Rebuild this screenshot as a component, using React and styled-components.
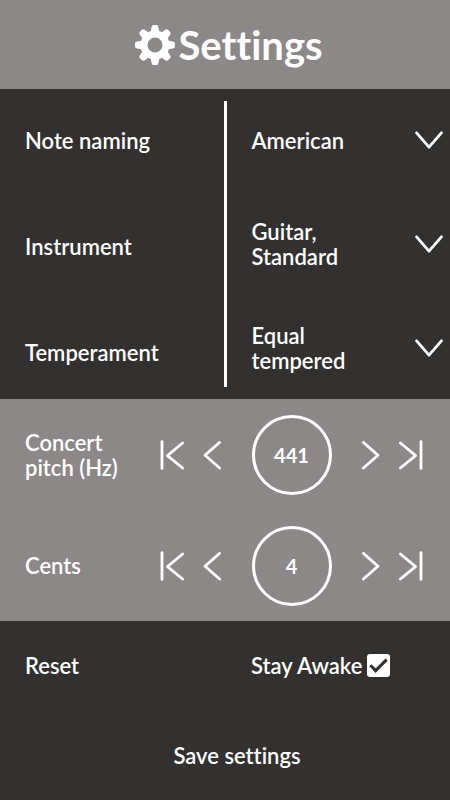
import React, { useState } from "react";
import styled, { createGlobalStyle } from "styled-components";

const dark = "#32312f";
const grey = "#8c8888";

const GlobalStyle = createGlobalStyle`
  *, *::before, *::after { box-sizing: border-box; }
  body {
    margin: 0;
    background: ${dark};
    color: #fff;
    font-family: Lato, "Open Sans", sans-serif;
    font-size: 22px;
    font-weight: 600;
    line-height: 25px;
    font-variant-ligatures: none;
  }
  button { font: inherit; color: inherit; background: none; border: 0; padding: 0; cursor: pointer; }
`;

const Page = styled.main`
  display: flex;
  flex-direction: column;
  min-height: 100vh;
`;

const Header = styled.header`
  display: flex;
  align-items: center;
  justify-content: center;
  gap: 3px;
  min-height: 89px;
  padding-left: 8px;
  background: ${grey};
`;

const Title = styled.h1`
  margin: 0;
  font-size: 40px;
  line-height: 48px;
  font-weight: 700;
`;

const Choices = styled.section`
  display: grid;
  grid-template-columns: 1fr 3px 1fr;
  padding: 12px 0;
`;

const Divider = styled.div`
  background: #fff;
`;

const Column = styled.div`
  display: flex;
  flex-direction: column;
  justify-content: center;
  gap: ${(p) => p.$gap};
  padding: ${(p) => p.$padding};
`;

const ChoiceLabel = styled.label`
  display: flex;
  align-items: center;
  min-height: 50px;
`;

const Choice = styled.div`
  position: relative;
  display: flex;
  align-items: center;
  justify-content: space-between;
  min-height: 50px;
`;

const ChoiceValue = styled.span`
  max-width: 120px;
`;

const ChoiceSelect = styled.select`
  position: absolute;
  inset: 0;
  width: 100%;
  opacity: 0;
  font: inherit;
  cursor: pointer;
`;

const Steppers = styled.section`
  background: ${grey};
`;

const StepperRow = styled.div`
  display: grid;
  grid-template-columns: 135px 1fr;
  align-items: center;
  min-height: 111px;
  padding: 0 27px 0 25px;
`;

const StepperLabel = styled.label`
  max-width: 110px;
`;

const Controls = styled.div`
  display: flex;
  align-items: center;
  justify-content: space-between;
`;

const StepPair = styled.div`
  display: flex;
  gap: 18px;
`;

const StepButton = styled.button`
  display: flex;
`;

const Dial = styled.input`
  width: 80px;
  height: 80px;
  padding: 0;
  border: 3px solid #fff;
  border-radius: 50%;
  background: none;
  color: #fff;
  text-align: center;
  font-family: inherit;
  font-size: 20px;
  font-weight: 700;
`;

const Options = styled.section`
  display: grid;
  grid-template-columns: 1fr 1fr;
  align-items: center;
  min-height: 89px;
`;

const ResetButton = styled.button`
  justify-self: start;
  margin-left: 25px;
`;

const Awake = styled.label`
  display: flex;
  align-items: center;
  gap: 5px;
  padding-left: 26px;
`;

const Tick = styled.input`
  appearance: none;
  display: grid;
  place-items: center;
  width: 23px;
  height: 23px;
  margin: 0;
  border-radius: 3px;
  background: #fff;
  cursor: pointer;

  &:checked::before {
    content: "";
    width: 17px;
    height: 9px;
    margin-bottom: 5px;
    border: solid ${dark};
    border-width: 0 0 3px 3px;
    transform: rotate(-45deg);
  }
`;

const Footer = styled.footer`
  display: flex;
  flex: 1;
  align-items: center;
  justify-content: center;
  padding-left: 24px;
`;

const Stroke = styled.svg`
  display: block;
  flex: none;
  fill: none;
  stroke: #fff;
  stroke-width: 2.8;
  stroke-linecap: round;
  stroke-linejoin: round;
`;

const Gear = () => (
  <svg width="40" height="40" viewBox="-20 -20 40 40" aria-hidden="true">
    <g fill="#fff">
      {[0, 45, 90, 135, 180, 225, 270, 315].map((a) => (
        <path
          key={a}
          transform={`rotate(${a})`}
          d="M-4.6 -12 L-3.4 -18 Q-3 -20 -1.6 -20 H1.6 Q3 -20 3.4 -18 L4.6 -12 Z"
        />
      ))}
    </g>
    <circle r="11" fill="none" stroke="#fff" strokeWidth="7" />
  </svg>
);

const ChevronDown = () => (
  <Stroke width="28" height="18" viewBox="0 0 28 18" aria-hidden="true">
    <path d="M1.6 1.8 L14 16.2 L26.4 1.8" />
  </Stroke>
);

const stepPaths = {
  first: { w: 25, d: "M2 1.6 V28.4 M22.6 3 L7.4 15.6 L22.6 28" },
  previous: { w: 18, d: "M16.6 2.4 L2 15.2 L16.6 28" },
  next: { w: 18, d: "M1.4 2.4 L16 15.2 L1.4 28" },
  last: { w: 25, d: "M23 1.6 V28.4 M2.4 3 L17.6 15.6 L2.4 28" },
};

function Step({ kind, label, onClick }) {
  const { w, d } = stepPaths[kind];
  return (
    <StepButton type="button" aria-label={label} onClick={onClick}>
      <Stroke width={w} height="30" viewBox={`0 0 ${w} 30`} aria-hidden="true">
        <path d={d} />
      </Stroke>
    </StepButton>
  );
}

function Stepper({ id, label, initial, min, max }) {
  const [value, setValue] = useState(initial);
  return (
    <StepperRow>
      <StepperLabel htmlFor={id}>{label}</StepperLabel>
      <Controls>
        <StepPair>
          <Step kind="first" label={`${label} minimum`} onClick={() => setValue(min)} />
          <Step kind="previous" label={`${label} down`} onClick={() => setValue(Math.max(min, value - 1))} />
        </StepPair>
        <Dial
          id={id}
          inputMode="numeric"
          value={value}
          onChange={(e) => setValue(Number(e.target.value) || 0)}
        />
        <StepPair>
          <Step kind="next" label={`${label} up`} onClick={() => setValue(Math.min(max, value + 1))} />
          <Step kind="last" label={`${label} maximum`} onClick={() => setValue(max)} />
        </StepPair>
      </Controls>
    </StepperRow>
  );
}

const choices = [
  { id: "naming", label: "Note naming", options: ["American", "European"] },
  { id: "instrument", label: "Instrument", options: ["Guitar, Standard", "Bass, Standard"] },
  { id: "temperament", label: "Temperament", options: ["Equal tempered", "Just"] },
];

function ChoiceField({ id, options }) {
  const [value, setValue] = useState(options[0]);
  return (
    <Choice>
      <ChoiceValue aria-hidden="true">{value}</ChoiceValue>
      <ChevronDown />
      <ChoiceSelect id={id} value={value} onChange={(e) => setValue(e.target.value)}>
        {options.map((o) => (
          <option key={o}>{o}</option>
        ))}
      </ChoiceSelect>
    </Choice>
  );
}

export default function App() {
  const [awake, setAwake] = useState(true);
  return (
    <>
      <GlobalStyle />
      <Page>
        <Header>
          <Gear />
          <Title>Settings</Title>
        </Header>
        <Choices>
          <Column $gap="56px" $padding="14px 12px 10px 25px">
            {choices.map((c) => (
              <ChoiceLabel key={c.id} htmlFor={c.id}>{c.label}</ChoiceLabel>
            ))}
          </Column>
          <Divider />
          <Column $gap="54px" $padding="12px 7px 12px 25px">
            {choices.map((c) => (
              <ChoiceField key={c.id} {...c} />
            ))}
          </Column>
        </Choices>
        <Steppers>
          <Stepper id="pitch" label="Concert pitch (Hz)" initial={441} min={400} max={480} />
          <Stepper id="cents" label="Cents" initial={4} min={0} max={50} />
        </Steppers>
        <Options>
          <ResetButton type="button">Reset</ResetButton>
          <Awake>
            Stay Awake
            <Tick type="checkbox" checked={awake} onChange={(e) => setAwake(e.target.checked)} />
          </Awake>
        </Options>
        <Footer>
          <button type="button">Save settings</button>
        </Footer>
      </Page>
    </>
  );
}
